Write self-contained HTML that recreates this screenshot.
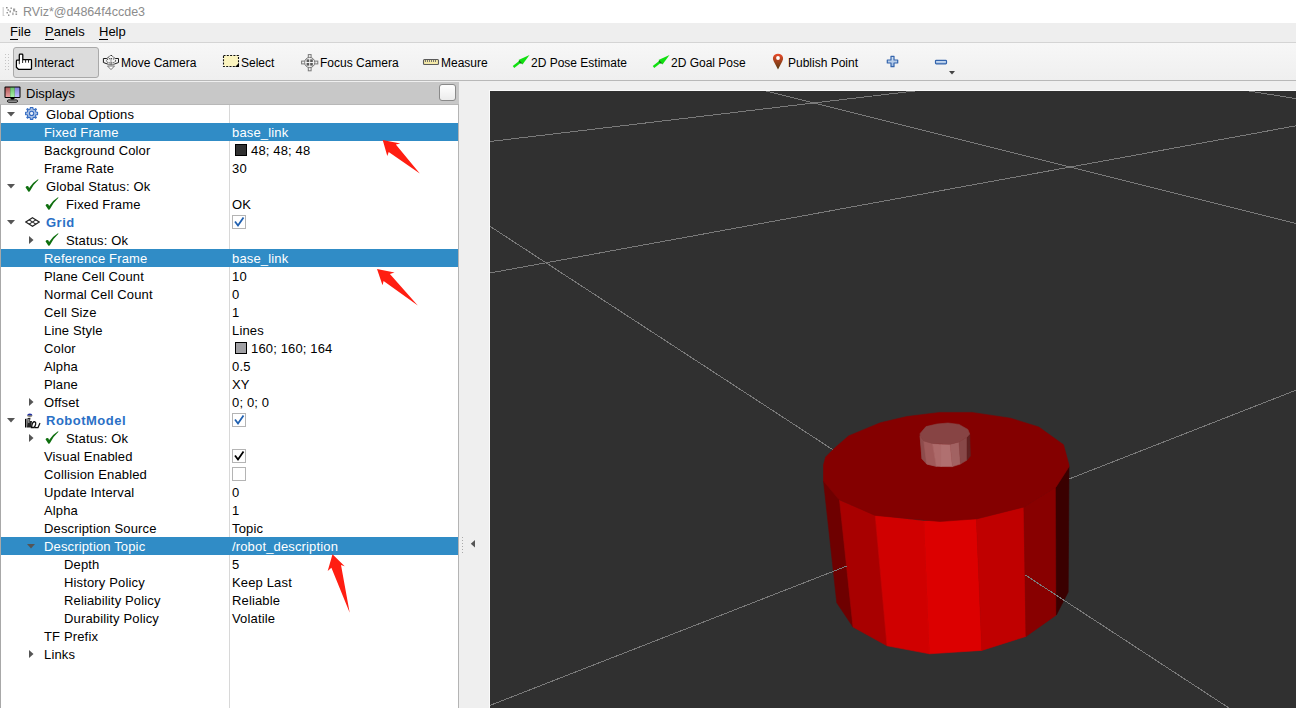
<!DOCTYPE html>
<html><head><meta charset="utf-8">
<style>
*{box-sizing:border-box;margin:0;padding:0}
html,body{width:1296px;height:708px;overflow:hidden;background:#efefef;font-family:"Liberation Sans",sans-serif;color:#000}
.abs{position:absolute}
.ic{position:absolute;line-height:0}
#title{position:absolute;left:0;top:0;width:1296px;height:23px;background:#fff}
#title .t{position:absolute;left:23px;top:4px;font-size:12.5px;line-height:16px;color:#8c8c8c;white-space:pre}
#menu{position:absolute;left:0;top:23px;width:1296px;height:20px;background:#eeeeee;border-bottom:1px solid #d4d4d4}
#menu span{position:absolute;top:2px;font-size:13px;line-height:14px;white-space:pre}
#menu u{text-decoration:none;border-bottom:1px solid #000}
#tb{position:absolute;left:0;top:43px;width:1296px;height:38px;background:linear-gradient(#f7f7f7,#efefef);border-bottom:1px solid #b8b8b8}
.tbt{position:absolute;top:13px;letter-spacing:0px;font-size:12px;line-height:15px;white-space:pre;color:#000}
#btn{position:absolute;left:13px;top:4px;width:86px;height:31px;border:1px solid #a9a9a9;border-radius:3px;background:#dcdcdc}
#dock{position:absolute;left:0;top:82px;width:459px;height:626px;background:#efefef}
#dhead{position:absolute;left:0;top:0;width:459px;height:23px;background:#c8c8c8}
#tree{position:absolute;left:0;top:104px;width:459px;height:604px;background:#fff;border-left:1px solid #a8a8a8;border-right:1px solid #b4b4b4;border-top:1px solid #b8b8b8}
#colsep{position:absolute;left:229px;top:105px;width:1px;height:603px;background:#d8d8d8}
.row{position:absolute;left:1px;width:457px;height:18px}
.row.sel{background:#308cc6}
.tx{position:absolute;margin-top:1px;letter-spacing:0.15px;font-size:13px;line-height:18px;white-space:pre;color:#000}
.tx.bold{font-weight:bold;color:#2a70c6;letter-spacing:0.5px}
.tx.w{color:#fff}
.sw{position:absolute;width:12px;height:12px;border:1px solid #000}
#view{position:absolute;left:490px;top:91px;width:806px;height:617px;background:#303030}
</style></head><body>
<div id="title">
 <svg class="ic" style="left:2px;top:6px" width="17" height="11" viewBox="0 0 17 11"><path d="M1.2 1 L1.2 9.5 L2.5 9.5" fill="none" stroke="#d0d0d0" stroke-width="1.2"/><g fill="#8a8a8a"><rect x="4" y="1" width="1.6" height="1.4"/><rect x="5.5" y="3.3" width="1.4" height="1.4"/><rect x="4.5" y="6" width="1.4" height="1.4"/><rect x="6" y="8.5" width="1.4" height="1.4"/><rect x="7.5" y="4.5" width="1.4" height="2"/><rect x="8.5" y="1.5" width="1.4" height="1.4"/><rect x="11" y="2.5" width="2.2" height="3" fill="#a0a0a0"/><rect x="13.5" y="5" width="1.6" height="1.4"/><rect x="13.5" y="7.5" width="1.6" height="1.4"/><rect x="10" y="6.5" width="1.8" height="2.6" fill="#b8b8b8"/></g></svg>
 <div class="t">RViz*@d4864f4ccde3</div>
</div>
<div id="menu">
 <span style="left:10px"><u>F</u>ile</span>
 <span style="left:45px"><u>P</u>anels</span>
 <span style="left:99px"><u>H</u>elp</span>
</div>
<div id="tb">
 <svg class="ic" style="left:5px;top:11px" width="5" height="17"><g fill="#c4c4c4"><rect x="0" y="0" width="1" height="1"/><rect x="3" y="0" width="1" height="1"/><rect x="0" y="3" width="1" height="1"/><rect x="3" y="3" width="1" height="1"/><rect x="0" y="6" width="1" height="1"/><rect x="3" y="6" width="1" height="1"/><rect x="0" y="9" width="1" height="1"/><rect x="3" y="9" width="1" height="1"/><rect x="0" y="12" width="1" height="1"/><rect x="3" y="12" width="1" height="1"/><rect x="0" y="15" width="1" height="1"/><rect x="3" y="15" width="1" height="1"/></g></svg>
 <div id="btn"></div>
 <!-- hand -->
 <svg class="ic" style="left:15px;top:10px" width="18" height="18" viewBox="0 0 18 18"><path d="M4.3 7.2 L4.3 2 Q4.3 1.2 5 1.2 L7 1.2 Q7.8 1.2 7.8 2 L7.8 6.5 L15.8 6.5 Q16.5 6.5 16.5 7.2 L16.5 15.6 Q16.5 16.3 15.8 16.3 L3.4 16.3 L1.4 14.3 L1.4 8 Q1.4 7.2 2.2 7.2 Z" fill="#fff" stroke="#000" stroke-width="1.25" stroke-linejoin="round"/><path d="M4.3 7.2 L4.3 11.2 M7.6 6.5 L7.6 10 M10.6 6.5 L10.6 9.7 M13.5 6.5 L13.5 9.7" stroke="#111" stroke-width="0.9"/></svg>
 <div class="tbt" style="left:34px">Interact</div>
 <!-- move camera -->
 <svg class="ic" style="left:102px;top:11px" width="18" height="17" viewBox="0 0 18 17"><path d="M5.5 12 L9 15.6 L12.5 12 Z" fill="#fff" stroke="#777" stroke-width="1"/><path d="M9 4 L9 12" stroke="#b8b8b8" stroke-width="1.6"/><g fill="none" stroke="#111" stroke-width="0.95" stroke-linejoin="round"><path d="M4.8 4.5 L9 1.1 L13.2 4.5" stroke-dasharray="1.2 0.6"/><path d="M4.8 4.5 L1.4 4.5 L1.4 8.5 L5.5 10 M12.5 10 L16.5 8.5 L16.5 4.5 L13.2 4.5"/><ellipse cx="9" cy="6.8" rx="4.6" ry="2.2" stroke-dasharray="1.1 0.9"/><path d="M5.5 10 Q9 11.5 12.5 10" stroke-dasharray="1.1 0.9"/></g></svg>
 <div class="tbt" style="left:121px">Move Camera</div>
 <!-- select -->
 <svg class="ic" style="left:222px;top:11px" width="18" height="14" viewBox="0 0 18 14"><rect x="1.5" y="1.5" width="15" height="11" fill="#fbf4bf" stroke="#111" stroke-width="1.1" stroke-dasharray="2 1.3"/><path d="M17 9 L17 13 L13 13 Z" fill="#000"/></svg>
 <div class="tbt" style="left:241px">Select</div>
 <!-- focus camera -->
 <svg class="ic" style="left:301px;top:54px;top:11px" width="18" height="18" viewBox="0 0 18 18"><g fill="#f0f0f0" stroke="#787878" stroke-width="1"><rect x="7.3" y="0.6" width="2.8" height="4"/><rect x="7.3" y="12.8" width="2.8" height="4"/><rect x="0.6" y="7.1" width="4" height="2.8"/><rect x="12.8" y="7.1" width="4" height="2.8"/><circle cx="8.7" cy="8.5" r="5.1"/></g><g fill="#5a5a5a"><rect x="5.6" y="5.4" width="2.6" height="2.6"/><rect x="9.2" y="5.4" width="2.6" height="2.6"/><rect x="5.6" y="9" width="2.6" height="2.6"/><rect x="9.2" y="9" width="2.6" height="2.6"/></g></svg>
 <div class="tbt" style="left:320px">Focus Camera</div>
 <!-- measure -->
 <svg class="ic" style="left:422px;top:15px" width="18" height="8" viewBox="0 0 18 8"><rect x="1.5" y="1.5" width="15" height="5" rx="1" fill="#f3e8a8" stroke="#5a5a5a" stroke-width="1.1"/><path d="M3.5 2 L3.5 4 M5.5 2 L5.5 4 M7.5 2 L7.5 4 M9.5 2 L9.5 4 M11.5 2 L11.5 4 M13.5 2 L13.5 4" stroke="#666" stroke-width="0.9"/></svg>
 <div class="tbt" style="left:441px">Measure</div>
 <!-- 2d pose -->
 <svg class="ic" style="left:512px;top:11px" width="19" height="15" viewBox="0 0 19 15"><path d="M1.5 13 L8.5 7.5" stroke="#10e010" stroke-width="2.4"/><path d="M17.5 1 L6.5 6 L10.5 10.5 Z" fill="#10e010"/><path d="M7 7 L9.5 9.5" stroke="#107010" stroke-width="1.3"/></svg>
 <div class="tbt" style="left:531px">2D Pose Estimate</div>
 <!-- 2d goal -->
 <svg class="ic" style="left:652px;top:11px" width="19" height="15" viewBox="0 0 19 15"><path d="M1.5 13 L8.5 7.5" stroke="#10e010" stroke-width="2.4"/><path d="M17.5 1 L6.5 6 L10.5 10.5 Z" fill="#10e010"/><path d="M7 7 L9.5 9.5" stroke="#107010" stroke-width="1.3"/></svg>
 <div class="tbt" style="left:671px">2D Goal Pose</div>
 <!-- publish point -->
 <svg class="ic" style="left:772px;top:10px" width="12" height="17" viewBox="0 0 12 17"><defs><linearGradient id="pg" x1="0" y1="0" x2="0" y2="1"><stop offset="0" stop-color="#ea4a2a"/><stop offset="1" stop-color="#553a10"/></linearGradient></defs><path d="M6 16.5 L1.8 8.5 Q0.5 6 1 4.5 Q2 0.8 6 0.8 Q10 0.8 11 4.5 Q11.5 6 10.2 8.5 Z" fill="url(#pg)"/><circle cx="6" cy="5" r="1.9" fill="#fff"/></svg>
 <div class="tbt" style="left:788px">Publish Point</div>
 <!-- plus -->
 <svg class="ic" style="left:886px;top:12px" width="14" height="14" viewBox="0 0 14 14"><defs><linearGradient id="bg1" x1="0" y1="0" x2="0" y2="1"><stop offset="0" stop-color="#d8e6f6"/><stop offset="1" stop-color="#9ab8e0"/></linearGradient></defs><path d="M5 1.3 L8 1.3 L8 5 L11.7 5 L11.7 8 L8 8 L8 11.7 L5 11.7 L5 8 L1.3 8 L1.3 5 L5 5 Z" fill="url(#bg1)" stroke="#3464ac" stroke-width="1.2" stroke-linejoin="round"/></svg>
 <!-- minus -->
 <svg class="ic" style="left:934px;top:16px" width="15" height="7" viewBox="0 0 15 7"><rect x="1.5" y="1.3" width="11" height="3.6" rx="0.8" fill="url(#bg1)" stroke="#3464ac" stroke-width="1.2"/></svg>
 <svg class="ic" style="left:949px;top:28px" width="7" height="4"><path d="M0 0 L6 0 L3 3.5 Z" fill="#444"/></svg>
</div>
<div id="dock">
 <div id="dhead">
  <svg class="ic" style="left:4px;top:4px" width="17" height="17" viewBox="0 0 17 17"><defs><linearGradient id="mr" x1="0" y1="0" x2="0" y2="1"><stop offset="0" stop-color="#b05858"/><stop offset="1" stop-color="#eaa0a0"/></linearGradient><linearGradient id="mgr" x1="0" y1="0" x2="0" y2="1"><stop offset="0" stop-color="#68c068"/><stop offset="1" stop-color="#a8f0a8"/></linearGradient><linearGradient id="mb" x1="0" y1="0" x2="0" y2="1"><stop offset="0" stop-color="#8080d8"/><stop offset="1" stop-color="#c0c0ff"/></linearGradient></defs><rect x="0.5" y="0.5" width="16" height="11.5" rx="1" fill="#000"/><rect x="1.5" y="1.5" width="4.7" height="9.5" fill="url(#mr)"/><rect x="6.2" y="1.5" width="4.6" height="9.5" fill="url(#mgr)"/><rect x="10.8" y="1.5" width="4.7" height="9.5" fill="url(#mb)"/><path d="M6 12 L11 12 L9.5 13.5 L7.5 13.5 Z" fill="#000"/><rect x="3.5" y="14" width="10" height="2.2" rx="1.1" fill="none" stroke="#000" stroke-width="1"/></svg>
  <div class="abs" style="left:26px;top:3px;font-size:13px;line-height:18px">Displays</div>
  <div class="abs" style="left:439px;top:2px;width:17px;height:17px;border:1px solid #8a8a8a;border-radius:3px;background:linear-gradient(#ffffff,#ececec)"></div>
 </div>
</div>
<div id="tree"></div>
<div id="colsep"></div>
<div class="row" style="top:105px"></div>
<svg class="ic" style="left:7px;top:112px" width="8" height="5"><path d="M0 0 L8 0 L4 4.5 Z" fill="#555"/></svg>
<div class="ic" style="left:25px;top:107px"><svg width="14" height="14" viewBox="0 0 14 14"><g transform="translate(6.6,6.4) scale(0.95)">
<path d="M-1.3,-6.3 L1.3,-6.3 L1.5,-4.6 L2.9,-4 L4.3,-5.1 L5.1,-4.3 L4,-2.9 L4.6,-1.5 L6.3,-1.3 L6.3,1.3 L4.6,1.5 L4,2.9 L5.1,4.3 L4.3,5.1 L2.9,4 L1.5,4.6 L1.3,6.3 L-1.3,6.3 L-1.5,4.6 L-2.9,4 L-4.3,5.1 L-5.1,4.3 L-4,2.9 L-4.6,1.5 L-6.3,1.3 L-6.3,-1.3 L-4.6,-1.5 L-4,-2.9 L-5.1,-4.3 L-4.3,-5.1 L-2.9,-4 L-1.5,-4.6 Z" fill="#a9c0e4" stroke="#2f68c0" stroke-width="1.1" stroke-linejoin="round"/>
<circle r="2.2" fill="#e8eef8" stroke="#2f68c0" stroke-width="1.1"/></g></svg></div>
<div class="tx" style="left:46px;top:105px">Global Options</div>
<div class="row sel" style="top:123px"></div>
<div class="tx w" style="left:44px;top:123px">Fixed Frame</div>
<div class="tx w" style="left:232px;top:123px">base_link</div>
<div class="row" style="top:141px"></div>
<div class="tx" style="left:44px;top:141px">Background Color</div>
<div class="sw" style="left:235px;top:144px;background:#303030"></div>
<div class="tx" style="left:251px;top:141px">48; 48; 48</div>
<div class="row" style="top:159px"></div>
<div class="tx" style="left:44px;top:159px">Frame Rate</div>
<div class="tx" style="left:232px;top:159px">30</div>
<div class="row" style="top:177px"></div>
<svg class="ic" style="left:7px;top:184px" width="8" height="5"><path d="M0 0 L8 0 L4 4.5 Z" fill="#555"/></svg>
<div class="ic" style="left:25px;top:177px"><svg width="15" height="16" viewBox="0 0 15 16"><path d="M0.5 10.3 Q1.6 8.5 3.3 9.3 L4.1 10.9 Q7.6 5.4 13 2.2 L13.5 2.8 Q8.6 7 4.7 14.4 L3.4 14.7 Z" fill="#0f6f0f"/></svg></div>
<div class="tx" style="left:46px;top:177px">Global Status: Ok</div>
<div class="row" style="top:195px"></div>
<div class="ic" style="left:45px;top:195px"><svg width="15" height="16" viewBox="0 0 15 16"><path d="M0.5 10.3 Q1.6 8.5 3.3 9.3 L4.1 10.9 Q7.6 5.4 13 2.2 L13.5 2.8 Q8.6 7 4.7 14.4 L3.4 14.7 Z" fill="#0f6f0f"/></svg></div>
<div class="tx" style="left:66px;top:195px">Fixed Frame</div>
<div class="tx" style="left:232px;top:195px">OK</div>
<div class="row" style="top:213px"></div>
<svg class="ic" style="left:7px;top:220px" width="8" height="5"><path d="M0 0 L8 0 L4 4.5 Z" fill="#555"/></svg>
<div class="ic" style="left:25px;top:217px"><svg width="15" height="10" viewBox="0 0 15 10"><g fill="none" stroke="#222" stroke-width="1.1"><path d="M7.5 0.7 L14.2 5 L7.5 9.3 L0.8 5 Z"/><path d="M4.15 2.85 L10.85 7.15 M10.85 2.85 L4.15 7.15"/></g></svg></div>
<div class="tx bold" style="left:46px;top:213px">Grid</div>
<svg class="ic" style="left:232px;top:215px" width="15" height="15" viewBox="0 0 15 15"><rect x="0.5" y="0.5" width="13" height="13" fill="#fff" stroke="#b4b4b4"/><path d="M3 6.5 L6 10.5 L11.5 2.5" fill="none" stroke="#2060b0" stroke-width="1.8"/></svg>
<div class="row" style="top:231px"></div>
<svg class="ic" style="left:29px;top:236px" width="5" height="8"><path d="M0 0 L4.5 4 L0 8 Z" fill="#555"/></svg>
<div class="ic" style="left:45px;top:231px"><svg width="15" height="16" viewBox="0 0 15 16"><path d="M0.5 10.3 Q1.6 8.5 3.3 9.3 L4.1 10.9 Q7.6 5.4 13 2.2 L13.5 2.8 Q8.6 7 4.7 14.4 L3.4 14.7 Z" fill="#0f6f0f"/></svg></div>
<div class="tx" style="left:66px;top:231px">Status: Ok</div>
<div class="row sel" style="top:249px"></div>
<div class="tx w" style="left:44px;top:249px">Reference Frame</div>
<div class="tx w" style="left:232px;top:249px">base_link</div>
<div class="row" style="top:267px"></div>
<div class="tx" style="left:44px;top:267px">Plane Cell Count</div>
<div class="tx" style="left:232px;top:267px">10</div>
<div class="row" style="top:285px"></div>
<div class="tx" style="left:44px;top:285px">Normal Cell Count</div>
<div class="tx" style="left:232px;top:285px">0</div>
<div class="row" style="top:303px"></div>
<div class="tx" style="left:44px;top:303px">Cell Size</div>
<div class="tx" style="left:232px;top:303px">1</div>
<div class="row" style="top:321px"></div>
<div class="tx" style="left:44px;top:321px">Line Style</div>
<div class="tx" style="left:232px;top:321px">Lines</div>
<div class="row" style="top:339px"></div>
<div class="tx" style="left:44px;top:339px">Color</div>
<div class="sw" style="left:235px;top:342px;background:#a0a0a4"></div>
<div class="tx" style="left:251px;top:339px">160; 160; 164</div>
<div class="row" style="top:357px"></div>
<div class="tx" style="left:44px;top:357px">Alpha</div>
<div class="tx" style="left:232px;top:357px">0.5</div>
<div class="row" style="top:375px"></div>
<div class="tx" style="left:44px;top:375px">Plane</div>
<div class="tx" style="left:232px;top:375px">XY</div>
<div class="row" style="top:393px"></div>
<svg class="ic" style="left:29px;top:398px" width="5" height="8"><path d="M0 0 L4.5 4 L0 8 Z" fill="#555"/></svg>
<div class="tx" style="left:44px;top:393px">Offset</div>
<div class="tx" style="left:232px;top:393px">0; 0; 0</div>
<div class="row" style="top:411px"></div>
<svg class="ic" style="left:7px;top:418px" width="8" height="5"><path d="M0 0 L8 0 L4 4.5 Z" fill="#555"/></svg>
<div class="ic" style="left:24px;top:413px"><svg width="17" height="16" viewBox="0 0 17 16"><ellipse cx="5.8" cy="2.2" rx="2.6" ry="1.8" fill="#2030a0"/><rect x="3.5" y="2.6" width="4.6" height="0.9" fill="#e0d060"/>
<path d="M1 14.5 L1 6 L2.5 5.5 L2.5 14.5 Z" fill="#000"/><path d="M3 14.5 L3.5 5 L6.5 4.8 L6 8 L8 8 L7 14.5 Z" fill="#222"/><path d="M7.5 14.5 C8 10,9 8.5,11 8.8 C12.5 9.5,11.5 13,10 14.5 Z" fill="none" stroke="#111" stroke-width="1.3"/><path d="M10.5 14.6 L14 14.6 L16 10" fill="none" stroke="#111" stroke-width="1.2"/><rect x="4" y="6" width="1.5" height="4" fill="#888"/></svg></div>
<div class="tx bold" style="left:46px;top:411px">RobotModel</div>
<svg class="ic" style="left:232px;top:413px" width="15" height="15" viewBox="0 0 15 15"><rect x="0.5" y="0.5" width="13" height="13" fill="#fff" stroke="#b4b4b4"/><path d="M3 6.5 L6 10.5 L11.5 2.5" fill="none" stroke="#2060b0" stroke-width="1.8"/></svg>
<div class="row" style="top:429px"></div>
<svg class="ic" style="left:29px;top:434px" width="5" height="8"><path d="M0 0 L4.5 4 L0 8 Z" fill="#555"/></svg>
<div class="ic" style="left:45px;top:429px"><svg width="15" height="16" viewBox="0 0 15 16"><path d="M0.5 10.3 Q1.6 8.5 3.3 9.3 L4.1 10.9 Q7.6 5.4 13 2.2 L13.5 2.8 Q8.6 7 4.7 14.4 L3.4 14.7 Z" fill="#0f6f0f"/></svg></div>
<div class="tx" style="left:66px;top:429px">Status: Ok</div>
<div class="row" style="top:447px"></div>
<div class="tx" style="left:44px;top:447px">Visual Enabled</div>
<svg class="ic" style="left:232px;top:449px" width="15" height="15" viewBox="0 0 15 15"><rect x="0.5" y="0.5" width="13" height="13" fill="#fff" stroke="#b4b4b4"/><path d="M3 6.5 L6 10.5 L11.5 2.5" fill="none" stroke="#000" stroke-width="1.8"/></svg>
<div class="row" style="top:465px"></div>
<div class="tx" style="left:44px;top:465px">Collision Enabled</div>
<svg class="ic" style="left:232px;top:467px" width="15" height="15" viewBox="0 0 15 15"><rect x="0.5" y="0.5" width="13" height="13" fill="#fff" stroke="#b4b4b4"/></svg>
<div class="row" style="top:483px"></div>
<div class="tx" style="left:44px;top:483px">Update Interval</div>
<div class="tx" style="left:232px;top:483px">0</div>
<div class="row" style="top:501px"></div>
<div class="tx" style="left:44px;top:501px">Alpha</div>
<div class="tx" style="left:232px;top:501px">1</div>
<div class="row" style="top:519px"></div>
<div class="tx" style="left:44px;top:519px">Description Source</div>
<div class="tx" style="left:232px;top:519px">Topic</div>
<div class="row sel" style="top:537px"></div>
<svg class="ic" style="left:27px;top:544px" width="8" height="5"><path d="M0 0 L8 0 L4 4.5 Z" fill="#555"/></svg>
<div class="tx w" style="left:44px;top:537px">Description Topic</div>
<div class="tx w" style="left:232px;top:537px">/robot_description</div>
<div class="row" style="top:555px"></div>
<div class="tx" style="left:64px;top:555px">Depth</div>
<div class="tx" style="left:232px;top:555px">5</div>
<div class="row" style="top:573px"></div>
<div class="tx" style="left:64px;top:573px">History Policy</div>
<div class="tx" style="left:232px;top:573px">Keep Last</div>
<div class="row" style="top:591px"></div>
<div class="tx" style="left:64px;top:591px">Reliability Policy</div>
<div class="tx" style="left:232px;top:591px">Reliable</div>
<div class="row" style="top:609px"></div>
<div class="tx" style="left:64px;top:609px">Durability Policy</div>
<div class="tx" style="left:232px;top:609px">Volatile</div>
<div class="row" style="top:627px"></div>
<div class="tx" style="left:44px;top:627px">TF Prefix</div>
<div class="row" style="top:645px"></div>
<svg class="ic" style="left:29px;top:650px" width="5" height="8"><path d="M0 0 L4.5 4 L0 8 Z" fill="#555"/></svg>
<div class="tx" style="left:44px;top:645px">Links</div>
<svg class="ic" style="left:462px;top:537px" width="2" height="17"><g fill="#aaa"><rect y="0" width="1" height="1"/><rect y="3" width="1" height="1"/><rect y="6" width="1" height="1"/><rect y="9" width="1" height="1"/><rect y="12" width="1" height="1"/><rect y="15" width="1" height="1"/></g></svg>
<svg class="ic" style="left:470px;top:540px" width="6" height="8"><path d="M5 0 L5 7.5 L0.8 3.75 Z" fill="#555"/></svg>
<div class="abs" style="left:489px;top:90px;width:807px;height:618px;background:#fafafa"></div>
<svg id="view" width="806" height="617" viewBox="490 91 806 617">
 <rect x="490" y="91" width="806" height="617" fill="#303030"/>
 <g stroke="#7a7a7a" stroke-width="1" fill="none" shape-rendering="crispEdges">
  <line x1="490" y1="141.5" x2="914.6" y2="91"/>
  <line x1="766" y1="91" x2="1296" y2="223.5"/>
  <line x1="490" y1="273" x2="1296" y2="125.8"/>
  <line x1="1248.5" y1="91" x2="1296" y2="98.6"/>
  <line x1="490" y1="226.3" x2="834" y2="450.5"/>
 </g>
 <!-- cylinder side panels -->
 <polygon points="823.5,481 839.5,500 853,627 836.8,602.8" fill="#6e0000" stroke="#6e0000" stroke-width="0.6"/>
 <polygon points="839.5,500 875.2,515.1 887,645.8 853,627" fill="#a80000" stroke="#a80000" stroke-width="0.6"/>
 <polygon points="875.2,515.1 924,521 929.4,653.8 887,645.8" fill="#d00000" stroke="#d00000" stroke-width="0.6"/>
 <polygon points="924,521 976.4,519.1 981.8,650.4 929.4,653.8" fill="#dc0000" stroke="#dc0000" stroke-width="0.6"/>
 <polygon points="976.4,519.1 1023.9,507 1026,636.4 981.8,650.4" fill="#c00000" stroke="#c00000" stroke-width="0.6"/>
 <polygon points="1023.9,507 1056,487 1056.4,614.9 1026,636.4" fill="#880000" stroke="#880000" stroke-width="0.6"/>
 <polygon points="1056,487 1069,466.8 1068.2,592 1056.4,614.9" fill="#3a0000" stroke="#3a0000" stroke-width="0.6"/>
 <!-- top face -->
 <polygon points="823.5,481 823.5,465 825.6,457.1 834.4,448.3 848.6,435.9 880.4,422.7 906.9,416.5 940,412.4 971.8,412.4 1010.6,418.2 1038.8,427 1063.5,444.7 1069,465 1069,466.8 1056,487 1023.9,507 977,518.8 940,521.5 921,519.8 875,515.4 838.9,499.5" fill="#840000" stroke="#840000" stroke-width="0.6"/>
 <!-- small cylinder -->
 <polygon points="920.1,436 923.8,440.9 922,458.9" fill="#7a3a3a" stroke="#7a3a3a" stroke-width="0.6"/>
 <polygon points="920.1,436 923.8,440.9 932.6,443.5 936.3,466.3 926.7,464 922,458.9" fill="#8e4c4c" stroke="#8e4c4c" stroke-width="0.6"/>
 <polygon points="923.8,440.9 932.6,443.5 936.3,466.3 926.7,464" fill="#a05a5a" stroke="#a05a5a" stroke-width="0.6"/>
 <polygon points="932.6,443.5 941,444.2 941,466.5 936.3,466.3" fill="#ad6a6a" stroke="#ad6a6a" stroke-width="0.6"/>
 <polygon points="941,444.2 950.2,444.2 952.4,466.6 941,466.5" fill="#b07070" stroke="#b07070" stroke-width="0.6"/>
 <polygon points="950.2,444.2 959,442 960.5,464 952.4,466.6" fill="#a26262" stroke="#a26262" stroke-width="0.6"/>
 <polygon points="959,442 967.1,436.9 967.1,460 960.5,464" fill="#884848" stroke="#884848" stroke-width="0.6"/>
 <polygon points="967.1,436.9 969.7,434 970.4,456 967.1,460" fill="#602222" stroke="#602222" stroke-width="0.6"/>
 <polygon points="920.1,433.6 926,426.6 937,424 948,423 959,424.4 967.9,429.5 969.7,434 967.1,436.9 959,442 950.2,444.2 932.6,443.5 923.8,440.9 920.1,436" fill="#874444" stroke="#874444" stroke-width="0.6"/>
 <g stroke="#7a7a7a" stroke-width="1" fill="none" shape-rendering="crispEdges">
  <line x1="1024.7" y1="574.6" x2="1229" y2="708"/>
  <line x1="490" y1="705.4" x2="847" y2="566"/>
  <line x1="1069" y1="479" x2="1296" y2="390.2"/>
 </g>
</svg>
<svg class="ic" style="left:0;top:0" width="1296" height="708">
 <polygon points="382.7,139.9 400.3,143.4 395.8,144.5 419.8,173.4 388.7,151.9 387.3,156.1" fill="#ff1e12"/>
 <polygon points="377,268.9 394.5,272.4 389.9,273.9 417.8,305.6 383.6,280.9 382.5,285.2" fill="#ff1e12"/>
 <polygon points="332.5,554.3 344.7,566.2 341,565.1 349.7,612.8 331.4,567.8 327.7,571" fill="#ff1e12"/>
</svg>
</body></html>
